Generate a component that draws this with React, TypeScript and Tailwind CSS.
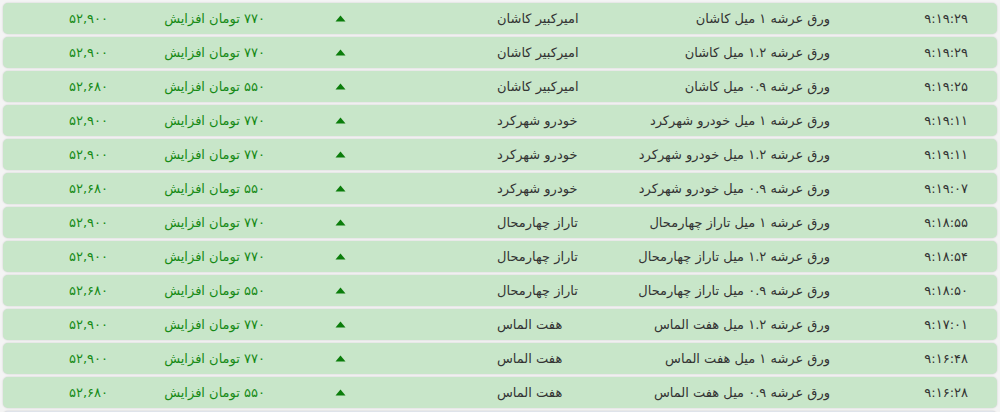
import React from 'react';

type Row = {
  time: string;
  title: string;
  seller: string;
  change: string;
  price: string;
};

const ROWS: Row[] = [
  { time: '۹:۱۹:۲۹', title: 'ورق عرشه ۱ میل کاشان', seller: 'امیرکبیر کاشان', change: '۷۷۰', price: '۵۲,۹۰۰' },
  { time: '۹:۱۹:۲۹', title: 'ورق عرشه ۱.۲ میل کاشان', seller: 'امیرکبیر کاشان', change: '۷۷۰', price: '۵۲,۹۰۰' },
  { time: '۹:۱۹:۲۵', title: 'ورق عرشه ۰.۹ میل کاشان', seller: 'امیرکبیر کاشان', change: '۵۵۰', price: '۵۲,۶۸۰' },
  { time: '۹:۱۹:۱۱', title: 'ورق عرشه ۱ میل خودرو شهرکرد', seller: 'خودرو شهرکرد', change: '۷۷۰', price: '۵۲,۹۰۰' },
  { time: '۹:۱۹:۱۱', title: 'ورق عرشه ۱.۲ میل خودرو شهرکرد', seller: 'خودرو شهرکرد', change: '۷۷۰', price: '۵۲,۹۰۰' },
  { time: '۹:۱۹:۰۷', title: 'ورق عرشه ۰.۹ میل خودرو شهرکرد', seller: 'خودرو شهرکرد', change: '۵۵۰', price: '۵۲,۶۸۰' },
  { time: '۹:۱۸:۵۵', title: 'ورق عرشه ۱ میل تاراز چهارمحال', seller: 'تاراز چهارمحال', change: '۷۷۰', price: '۵۲,۹۰۰' },
  { time: '۹:۱۸:۵۴', title: 'ورق عرشه ۱.۲ میل تاراز چهارمحال', seller: 'تاراز چهارمحال', change: '۷۷۰', price: '۵۲,۹۰۰' },
  { time: '۹:۱۸:۵۰', title: 'ورق عرشه ۰.۹ میل تاراز چهارمحال', seller: 'تاراز چهارمحال', change: '۵۵۰', price: '۵۲,۶۸۰' },
  { time: '۹:۱۷:۰۱', title: 'ورق عرشه ۱.۲ میل هفت الماس', seller: 'هفت الماس', change: '۷۷۰', price: '۵۲,۹۰۰' },
  { time: '۹:۱۶:۴۸', title: 'ورق عرشه ۱ میل هفت الماس', seller: 'هفت الماس', change: '۷۷۰', price: '۵۲,۹۰۰' },
  { time: '۹:۱۶:۲۸', title: 'ورق عرشه ۰.۹ میل هفت الماس', seller: 'هفت الماس', change: '۵۵۰', price: '۵۲,۶۸۰' },
];

const UpArrow = () => (
  <svg width="11" height="7" viewBox="0 0 11 7" className="block">
    <path d="M5.5 0.5 L10.5 6.5 L0.5 6.5 Z" fill="#0b7d0b" />
  </svg>
);

const PriceRow = ({ row }: { row: Row }) => (
  <div className="flex h-[31px] items-center rounded-[5px] bg-[#c8e6c9] shadow-[0_0_2px_rgba(0,0,0,0.18)] text-[13px] text-[#333]">
    <div className="w-[137px] pr-[29px] text-right">{row.time}</div>
    <div className="w-[270px] pr-[30px] text-right">{row.title}</div>
    <div className="w-[190px] pl-[97px] text-left whitespace-nowrap">{row.seller}</div>
    <div className="w-[120px] flex justify-center">
      <UpArrow />
    </div>
    <div className="w-[150px] pr-[15px] text-right text-[#168a16]">{row.change} تومان افزایش</div>
    <div className="w-[127px] pr-[22px] text-right text-[#168a16]">{row.price}</div>
  </div>
);

export default function App() {
  return (
    <div
      dir="rtl"
      className="h-[412px] overflow-hidden bg-[#f4f4f4] px-[3px] pt-[3px]"
      style={{ fontFamily: '"DejaVu Sans", "Noto Sans", sans-serif' }}
    >
      <div className="flex flex-col gap-[3px]">
        {ROWS.map((row, i) => (
          <PriceRow key={i} row={row} />
        ))}
        <div className="h-[31px] rounded-[5px] bg-[#dfe3ea] shadow-[0_0_2px_rgba(0,0,0,0.18)]" />
      </div>
    </div>
  );
}
